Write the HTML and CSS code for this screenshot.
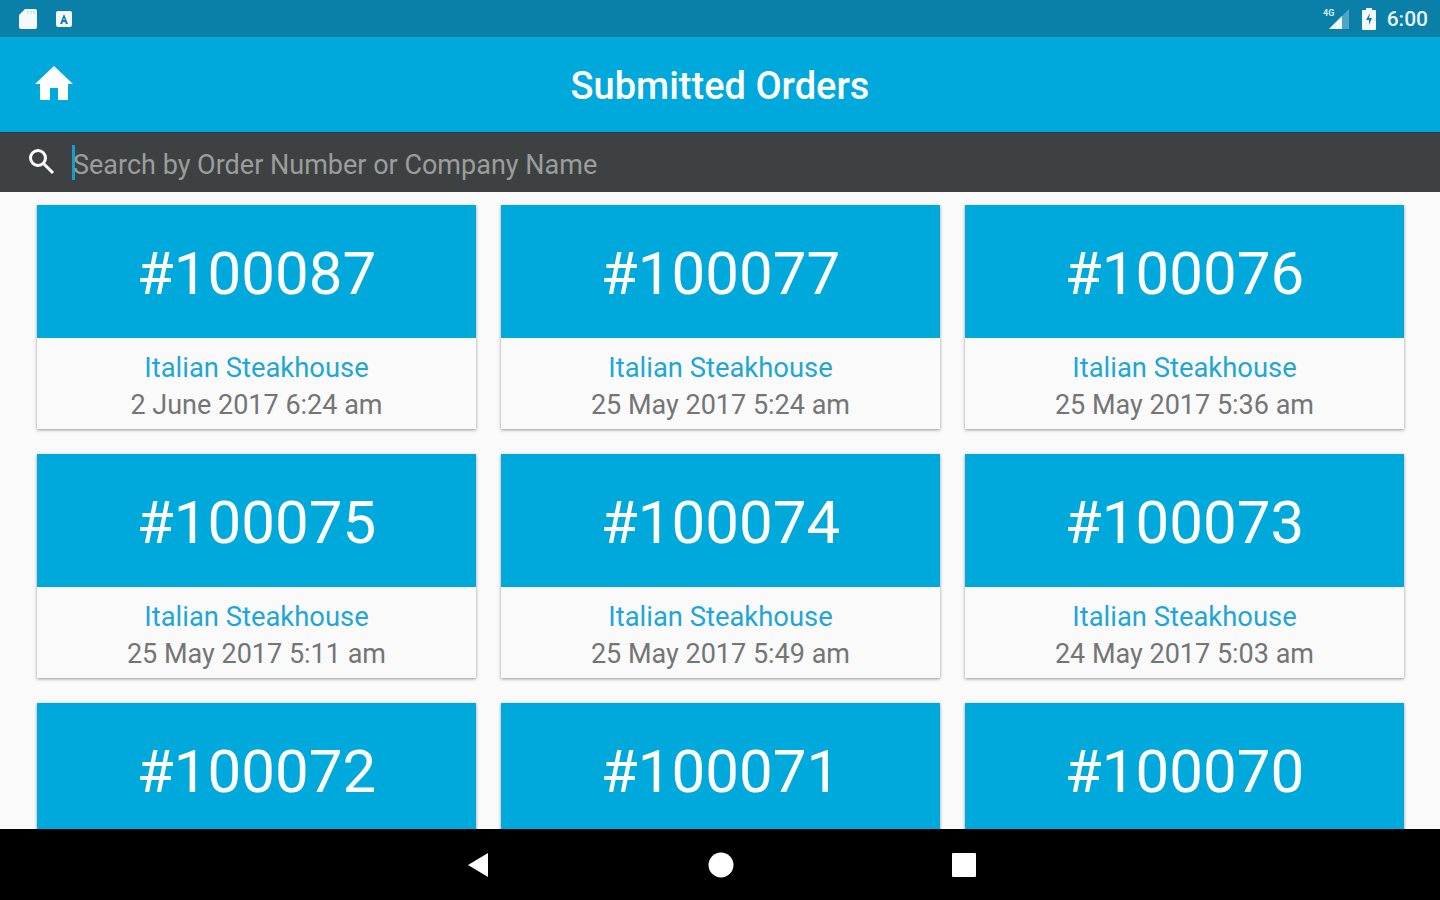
FILE: index.html
```html
<!DOCTYPE html>
<html lang="en">
<head>
    <meta charset="UTF-8">
    <title>Submitted Orders</title>
    <link rel="stylesheet" href="styles.css">
</head>
<body>

<div class="status-bar">
    <div class="status-left">
        <svg width="20" height="22" viewBox="0 0 20 22"><path d="M7 1h10a2 2 0 0 1 2 2v16a2 2 0 0 1-2 2H3a2 2 0 0 1-2-2V7z" fill="#f4fafc"/><path d="M10 2v4M13 2v4M16 2v4" stroke="#b9dbe7" stroke-width="1"/></svg>
        <svg class="icon-a" width="18" height="18" viewBox="0 0 18 18"><rect x="1" y="1" width="16" height="16" rx="2" fill="#f4fafc"/><path d="M5 14 9 4l4 10h-2.200l-.6-2H7.800l-.6 2zM8.300 10h1.400L9 8z" fill="#0a7fa8"/></svg>
    </div>
    <div class="status-right">
        <svg width="28" height="24" viewBox="0 0 28 24"><path d="M26 2v20H6z" fill="#4fa6c4"/><path d="M19 9v13H6z" fill="#f4fafc"/><text class="net-type" x="0" y="9">4G</text></svg>
        <svg width="16" height="22" viewBox="0 0 16 22"><path d="M5 0h6v2h3a1 1 0 0 1 1 1v18a1 1 0 0 1-1 1H2a1 1 0 0 1-1-1V3a1 1 0 0 1 1-1h3z" fill="#f4fafc"/><path d="M9 5 5 12h3v5l3-7H8z" fill="#0a7fa8"/></svg>
        <span class="status-time">6:00</span>
    </div>
</div>

<header class="toolbar">
    <svg class="home-icon" width="40" height="34" viewBox="0 0 40 34"><path d="M20 0 39 18h-5v16H24V22h-8v12H6V18H1z" fill="#ffffff"/></svg>
    <h1>Submitted Orders</h1>
</header>

<div class="search-bar">
    <svg class="search-icon" width="28" height="28" viewBox="0 0 28 28" fill="none" stroke="#ffffff" stroke-width="3"><circle cx="11" cy="11" r="7.500"/><path d="M16.500 16.500 26 26"/></svg>
    <div class="search-input"><span class="caret"></span><span class="placeholder">Search by Order Number or Company Name</span></div>
</div>

<main class="orders">
    <div class="order-grid">
        <div class="order-card">
            <div class="order-number">#100087</div>
            <div class="order-info"><p class="company">Italian Steakhouse</p><p class="date">2 June 2017 6:24 am</p></div>
        </div>
        <div class="order-card">
            <div class="order-number">#100077</div>
            <div class="order-info"><p class="company">Italian Steakhouse</p><p class="date">25 May 2017 5:24 am</p></div>
        </div>
        <div class="order-card">
            <div class="order-number">#100076</div>
            <div class="order-info"><p class="company">Italian Steakhouse</p><p class="date">25 May 2017 5:36 am</p></div>
        </div>
        <div class="order-card">
            <div class="order-number">#100075</div>
            <div class="order-info"><p class="company">Italian Steakhouse</p><p class="date">25 May 2017 5:11 am</p></div>
        </div>
        <div class="order-card">
            <div class="order-number">#100074</div>
            <div class="order-info"><p class="company">Italian Steakhouse</p><p class="date">25 May 2017 5:49 am</p></div>
        </div>
        <div class="order-card">
            <div class="order-number">#100073</div>
            <div class="order-info"><p class="company">Italian Steakhouse</p><p class="date">24 May 2017 5:03 am</p></div>
        </div>
        <div class="order-card">
            <div class="order-number">#100072</div>
        </div>
        <div class="order-card">
            <div class="order-number">#100071</div>
        </div>
        <div class="order-card">
            <div class="order-number">#100070</div>
        </div>
    </div>
</main>

<nav class="nav-bar">
    <svg width="24" height="26" viewBox="0 0 24 26"><path d="M22 1v24L2 13z" fill="#ffffff"/></svg>
    <svg width="26" height="26" viewBox="0 0 26 26"><circle cx="13" cy="13" r="12.500" fill="#ffffff"/></svg>
    <svg width="24" height="24" viewBox="0 0 24 24"><rect width="24" height="24" rx="1" fill="#ffffff"/></svg>
</nav>

</body>
</html>
```

FILE: styles.css
```css
html, body {
    margin: 0;
    padding: 0;
    height: 100%;
    font-family: Roboto, sans-serif;
    background-color: #fafafa;
    overflow: hidden;
}

body {
    display: flex;
    flex-direction: column;
}

/* Status bar */
.status-bar {
    height: 37px;
    flex: none;
    display: flex;
    align-items: center;
    justify-content: space-between;
    padding: 0 12px 0 18px;
    background-color: #0a7fa8;
    color: #e8f4f8;
}

.status-left,
.status-right {
    display: flex;
    align-items: center;
}

.status-left {
    gap: 17px;
}

.status-right {
    gap: 10px;
}

.status-time {
    font-size: 21px;
    font-weight: 500;
}

.net-type {
    font-size: 9px;
    font-weight: 700;
    fill: #d7ecf3;
}

/* Toolbar */
.toolbar {
    height: 95px;
    flex: none;
    box-sizing: border-box;
    padding-top: 2px;
    position: relative;
    display: flex;
    align-items: center;
    justify-content: center;
    background-color: #00a9dc;
}

.toolbar h1 {
    margin: 0;
    font-size: 38px;
    font-weight: 500;
    color: #ffffff;
}

.home-icon {
    position: absolute;
    left: 34px;
    top: 29px;
}

/* Search */
.search-bar {
    height: 60px;
    flex: none;
    box-sizing: border-box;
    display: flex;
    align-items: center;
    gap: 17px;
    padding-left: 27px;
    background-color: #3e4142;
    border-top: 1px solid #333637;
}

.search-icon {
    margin-top: -4px;
}

.search-input {
    display: flex;
    align-items: center;
}

.caret {
    width: 3px;
    height: 35px;
    background-color: #1a9ccb;
}

.placeholder {
    margin-left: -2px;
    padding-top: 4px;
    font-size: 27px;
    color: #9b9d9d;
}

/* Orders */
.orders {
    flex: 1;
    min-height: 0;
    overflow: hidden;
    padding: 13px 36px 0 37px;
}

.order-grid {
    display: grid;
    grid-template-columns: repeat(3, 439px);
    gap: 25px;
}

.order-card {
    background-color: #fafafa;
    box-shadow: 0 1px 3px rgba(0, 0, 0, 0.4);
}

.order-number {
    height: 133px;
    box-sizing: border-box;
    padding-top: 3px;
    display: flex;
    align-items: center;
    justify-content: center;
    font-size: 60px;
    color: #ffffff;
    background-color: #00a9dc;
}

.order-info {
    height: 91px;
    box-sizing: border-box;
    padding-top: 12px;
    text-align: center;
    font-size: 27px;
    line-height: 37px;
}

.order-info p {
    margin: 0;
}

.company {
    font-size: 27.4px;
    color: #1fa6d8;
}

.date {
    color: #757575;
}

/* Nav bar */
.nav-bar {
    height: 71px;
    flex: none;
    position: relative;
    z-index: 1;
    box-sizing: border-box;
    display: flex;
    align-items: center;
    justify-content: space-between;
    padding: 0 464px 0 466px;
    background-color: #000000;
}
```
